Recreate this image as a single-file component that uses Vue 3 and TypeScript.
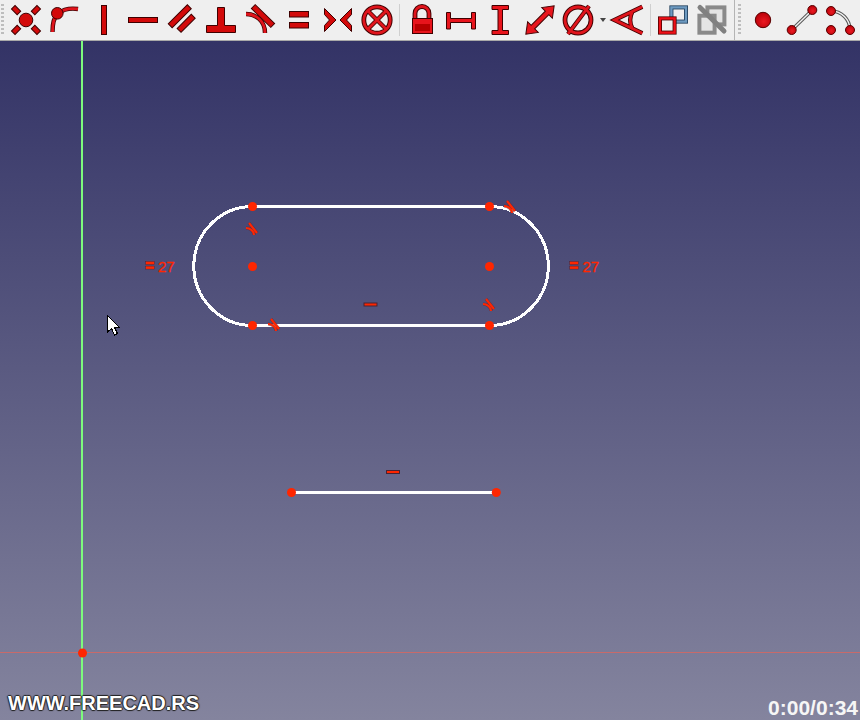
<script setup lang="ts">
const constraintPoints: [number, number][] = [
  [252.5, 206.5], [489.5, 206.5], [252.5, 325.5], [489.5, 325.5], [252.5, 266.5], [489.5, 266.5],
  [291.5, 492.5], [496.3, 492.5], [82.5, 653],
]
const tangentMarks: [number, number][] = [[252, 229], [274, 325], [489, 305], [510, 207]]
const equalMarks = [
  { x: 145.7, tx: 158, y: 261.5 },
  { x: 569.8, tx: 582.5, y: 261.5 },
]
const horizontalMarks: [number, number, number][] = [[364, 303, 13], [386.5, 470.5, 13]]
</script>

<template>
  <div class="app">
    <header class="toolbar">
      <span class="grip grip-left"></span>
      <div class="group">
        <!-- coincident -->
        <svg class="icon" viewBox="0 0 32 32">
          <g class="solid">
            <rect x="13.5" y="-2" width="5" height="8" transform="rotate(-45 16 16)" />
            <rect x="13.5" y="-2" width="5" height="8" transform="rotate(45 16 16)" />
            <rect x="13.5" y="-2" width="5" height="8" transform="rotate(135 16 16)" />
            <rect x="13.5" y="-2" width="5" height="8" transform="rotate(225 16 16)" />
            <circle cx="16" cy="16" r="6.8" />
          </g>
        </svg>
        <!-- point on object -->
        <svg class="icon" viewBox="0 0 32 32">
          <path class="line-dark" d="M3.5 28C3.5 20 5 13 9 9.5C14 5.5 22 4 29 5" />
          <path class="line-red" d="M3.5 28C3.5 20 5 13 9 9.5C14 5.5 22 4 29 5" />
          <circle class="solid" cx="8.3" cy="9.3" r="5.8" />
        </svg>
        <!-- vertical -->
        <svg class="icon" viewBox="0 0 32 32">
          <rect class="solid" x="13.5" y="1.5" width="5" height="29" />
        </svg>
        <!-- horizontal -->
        <svg class="icon" viewBox="0 0 32 32">
          <rect class="solid" x="1.5" y="13.5" width="29" height="5" />
        </svg>
        <!-- parallel -->
        <svg class="icon" viewBox="0 0 32 32">
          <g class="solid">
            <rect x="0.3" y="9.5" width="27" height="5.5" transform="rotate(-45 13.8 12.3)" />
            <rect x="10.2" y="16.5" width="20" height="5.5" transform="rotate(-45 20.2 19.3)" />
          </g>
        </svg>
        <!-- perpendicular -->
        <svg class="icon" viewBox="0 0 32 32">
          <polygon class="solid" points="12.5,3.5 19.5,3.5 19.5,21.5 30.5,21.5 30.5,28.5 1.5,28.5 1.5,21.5 12.5,21.5" />
        </svg>
        <!-- tangent -->
        <svg class="icon" viewBox="0 0 32 32">
          <rect class="solid" x="5.5" y="9.25" width="27" height="5.5" transform="rotate(44 19 12)" />
          <path class="line-dark" d="M2 10C12 10 21 17 21 29" />
          <path class="line-red" d="M2 10C12 10 21 17 21 29" />
        </svg>
        <!-- equal -->
        <svg class="icon" viewBox="0 0 32 32">
          <g class="solid">
            <rect x="6.5" y="7.5" width="19" height="5.5" />
            <rect x="6.5" y="18.5" width="19" height="5.5" />
          </g>
        </svg>
        <!-- symmetric -->
        <svg class="icon" viewBox="0 0 32 32">
          <g class="solid">
            <polygon points="2.5,4.5 14,16 2.5,27.5 2.5,21.5 7.5,16 2.5,10.5" />
            <polygon points="29.5,4.5 18,16 29.5,27.5 29.5,21.5 24.5,16 29.5,10.5" />
          </g>
        </svg>
        <!-- block -->
        <svg class="icon" viewBox="0 0 32 32">
          <circle class="line-dark thick" cx="16" cy="16" r="13.2" />
          <path class="line-dark" d="M7 7L25 25M25 7L7 25" />
          <path class="line-red" d="M7 7L25 25M25 7L7 25" />
          <circle class="line-red" cx="16" cy="16" r="13.2" />
        </svg>
      </div>
      <span class="sep"></span>
      <div class="group">
        <!-- lock -->
        <svg class="icon" viewBox="0 0 32 32">
          <path class="line-dark thick" d="M9 15V9.5a7 7 0 0 1 14 0V15" />
          <path class="line-red" d="M9 15V9.5a7 7 0 0 1 14 0V15" />
          <rect class="solid bright" x="6.5" y="14.5" width="20" height="15" />
          <rect class="shade" x="9" y="20" width="15" height="7" />
        </svg>
        <!-- horizontal distance -->
        <svg class="icon" viewBox="0 0 32 32">
          <polygon class="solid bright" points="1.5,8.5 5.5,8.5 5.5,14.5 26.5,14.5 26.5,8.5 30.5,8.5 30.5,25 26.5,25 26.5,18.5 5.5,18.5 5.5,25 1.5,25" />
        </svg>
        <!-- vertical distance -->
        <svg class="icon" viewBox="0 0 32 32">
          <polygon class="solid bright" points="8,1.5 24.5,1.5 24.5,5.5 18.5,5.5 18.5,26.5 24.5,26.5 24.5,30.5 8,30.5 8,26.5 14,26.5 14,5.5 8,5.5" />
        </svg>
        <!-- length -->
        <svg class="icon" viewBox="0 0 32 32">
          <polygon class="solid bright" transform="rotate(-45 17 16)" points="-3,16 7,8.5 7,13.5 27,13.5 27,8.5 37,16 27,23.5 27,18.5 7,18.5 7,23.5" />
        </svg>
        <!-- diameter -->
        <svg class="icon" viewBox="0 0 32 32">
          <circle class="line-dark thick" cx="16" cy="16" r="13" />
          <path class="line-dark" d="M6 30L27 2" />
          <circle class="line-red" cx="16" cy="16" r="13" />
          <path class="line-red" d="M6 30L27 2" />
        </svg>
      </div>
      <span class="caret"></span>
      <div class="group">
        <!-- angle -->
        <svg class="icon" viewBox="0 0 32 32">
          <path class="line-dark" d="M30.3 2.7L2.5 16L30.3 29.3M20.3 7.7Q16 16 20.3 24.3" />
          <path class="line-red" d="M30.3 2.7L2.5 16L30.3 29.3M20.3 7.7Q16 16 20.3 24.3" />
        </svg>
      </div>
      <span class="sep sep-last"></span>
      <div class="group">
        <!-- internal / external: red and blue squares -->
        <svg class="icon" viewBox="0 0 32 32">
          <rect class="square-blue-dark" x="13.4" y="3.4" width="14.6" height="14.2" />
          <rect class="square-blue" x="13.4" y="3.4" width="14.6" height="14.2" />
          <rect class="square-red-dark" x="2" y="14.4" width="14.6" height="14.2" />
          <rect class="square-red" x="2" y="14.4" width="14.6" height="14.2" />
        </svg>
        <!-- toggle construction: disabled -->
        <svg class="icon" viewBox="0 0 32 32">
          <rect class="square-gray" x="10.4" y="3.4" width="17" height="17" />
          <rect class="square-gray" x="2.4" y="11.7" width="15.2" height="17" />
          <path class="bar-gray" d="M3 3.5L27 27" />
        </svg>
      </div>
      <span class="divider"></span>
      <span class="grip grip-right"></span>
      <div class="group group-points">
        <svg class="icon" viewBox="0 0 32 32">
          <defs>
            <radialGradient id="ballShine" cx="0.55" cy="0.6" r="0.6">
              <stop offset="0" stop-color="#ec1a22" />
              <stop offset="1" stop-color="#b80008" />
            </radialGradient>
          </defs>
          <circle class="ball" cx="16" cy="16" r="7.7" />
        </svg>
        <svg class="icon" viewBox="0 0 32 32">
          <path class="link-dark" d="M5.7 26L26.3 6" />
          <path class="link-light" d="M5.7 26L26.3 6" />
          <circle class="ball" cx="5.7" cy="26" r="4.5" />
          <circle class="ball" cx="26.3" cy="6" r="4.5" />
        </svg>
        <svg class="icon" viewBox="0 0 32 32">
          <path class="link-dark" d="M6 7A19 19 0 0 1 25 26" />
          <path class="link-light" d="M6 7A19 19 0 0 1 25 26" />
          <circle class="ball" cx="6" cy="7" r="4.5" />
          <circle class="ball" cx="6" cy="26" r="4.5" />
          <circle class="ball" cx="25" cy="26" r="4.5" />
        </svg>
      </div>
    </header>

    <main class="viewport">
      <svg class="canvas" viewBox="0 41 860 679">
        <rect class="axis-x" x="0" y="652" width="860" height="1" />
        <rect class="axis-y" x="81" y="41" width="2" height="679" />

        <path class="geometry" d="M252.5 206.5H489.5A58.8 59.5 0 0 1 489.5 325.5H252.5A58.7 59.5 0 0 1 252.5 206.5Z" />
        <path class="geometry" d="M291.5 492.5H496" />

        <circle v-for="p in constraintPoints" :key="`${p[0]}-${p[1]}`" class="point" :cx="p[0]" :cy="p[1]" r="4.5" />

        <g v-for="m in tangentMarks" :key="`t${m[0]}`" :transform="`translate(${m[0]} ${m[1]})`">
          <path class="mark-shadow" d="M-3 -6L5 4M-6 -1C-2 -1 2 2 2 6" />
          <path class="mark" d="M-3 -6L5 4M-6 -1C-2 -1 2 2 2 6" />
        </g>

        <rect
          v-for="h in horizontalMarks"
          :key="`h${h[0]}`"
          class="mark-bar"
          :x="h[0]"
          :y="h[1]"
          :width="h[2]"
          height="3"
        />

        <g v-for="e in equalMarks" :key="`e${e.x}`">
          <rect class="mark-bar thin" :x="e.x" :y="e.y" width="8.6" height="3" />
          <rect class="mark-bar thin" :x="e.x" :y="e.y + 4.6" width="8.6" height="3" />
          <text class="datum" :x="e.tx" y="272">27</text>
        </g>

        <path class="cursor" d="M107.5 315.5V332L111.5 328.5L114.5 335L117.5 333.5L114.5 327.5H119.5Z" />
      </svg>

      <span class="watermark">WWW.FREECAD.RS</span>
      <span class="timer">0:00/0:34</span>
    </main>
  </div>
</template>

<style>
html,
body {
  margin: 0;
  overflow: hidden;
}
</style>

<style scoped>
.app {
  width: 860px;
  height: 720px;
  display: flex;
  flex-direction: column;
  overflow: hidden;
  font-family: "Liberation Sans", Arial, sans-serif;
}

.toolbar {
  position: relative;
  flex: none;
  height: 40px;
  box-sizing: content-box;
  display: flex;
  align-items: center;
  background: #efefef;
  border-bottom: 1px solid #a9a9a9;
}

.group {
  display: flex;
  align-items: center;
  gap: 7px;
}

.icon {
  flex: none;
  width: 32px;
  height: 32px;
  overflow: visible;
}

.grip {
  flex: none;
  width: 3px;
  height: 32px;
  background: repeating-linear-gradient(to bottom, #bdbdbd 0 2px, transparent 2px 4px);
}

.grip-left {
  margin-left: 1px;
  margin-right: 6px;
}

.grip-right {
  margin-left: 3px;
  margin-right: 6px;
}

.sep {
  flex: none;
  width: 1px;
  height: 32px;
  margin: 0 6px;
  background: #cfcfcf;
}

.sep-last {
  margin: 0 7px 0 6px;
}

.caret {
  flex: none;
  width: 0;
  height: 0;
  margin: 0 6px 0 6px;
  border-left: 3.5px solid transparent;
  border-right: 3.5px solid transparent;
  border-top: 4px solid #444;
}

.divider {
  flex: none;
  width: 1px;
  height: 40px;
  margin-left: 5px;
  background: #b4b4b4;
}

.solid,
.solid * {
  fill: #d30a0a;
  stroke: #3f0000;
  stroke-width: 1;
}

.bright {
  fill: #e8141c;
}

.shade {
  fill: #b80000;
}

.line-dark {
  fill: none;
  stroke: #3f0000;
  stroke-width: 4.4;
}

.line-dark.thick {
  stroke-width: 4.8;
}

.line-red {
  fill: none;
  stroke: #e0141c;
  stroke-width: 2.8;
}

.square-blue-dark {
  fill: #efefef;
  stroke: #1c3a57;
  stroke-width: 4;
}

.square-blue {
  fill: none;
  stroke: #6d9ac0;
  stroke-width: 2.4;
}

.square-red-dark {
  fill: #efefef;
  stroke: #4a0000;
  stroke-width: 4;
}

.square-red {
  fill: none;
  stroke: #ee1018;
  stroke-width: 2.4;
}

.square-gray {
  fill: #e4e4e4;
  stroke: #8a8a8a;
  stroke-width: 4;
}

.bar-gray {
  fill: none;
  stroke: #808080;
  stroke-width: 5;
  stroke-linecap: round;
}

.ball {
  fill: url(#ballShine);
  stroke: #5a0000;
  stroke-width: 1;
}

.link-dark {
  fill: none;
  stroke: #555;
  stroke-width: 3.4;
}

.link-light {
  fill: none;
  stroke: #f2f2f2;
  stroke-width: 1.4;
}

.viewport {
  position: relative;
  flex: 1;
  background: linear-gradient(to bottom, #333366, #84849e);
}

.canvas {
  position: absolute;
  inset: 0;
  width: 860px;
  height: 679px;
}

.axis-x {
  fill: #c86a6a;
}

.axis-y {
  fill: #7dfb7d;
}

.geometry {
  fill: none;
  stroke: #fff;
  stroke-width: 3;
  shape-rendering: crispEdges;
}

.point {
  fill: #ff2600;
}

.mark {
  fill: none;
  stroke: #ff2600;
  stroke-width: 2.1;
}

.mark-shadow {
  fill: none;
  stroke: #5c2338;
  stroke-width: 3.2;
  opacity: 0.6;
}

.mark-bar {
  fill: #ff2600;
  stroke: #4a2233;
  stroke-width: 1;
}

.mark-bar.thin {
  stroke-width: 0.4;
}

.datum {
  font-family: "Liberation Sans", Arial, sans-serif;
  font-size: 15px;
  fill: #ff2600;
  stroke: #ff2600;
  stroke-width: 0.3;
}

.cursor {
  fill: #fff;
  stroke: #000;
  stroke-width: 1;
  shape-rendering: crispEdges;
}

.watermark {
  position: absolute;
  left: 8px;
  bottom: 6px;
  font-size: 20px;
  line-height: 22px;
  font-weight: 700;
  color: #fff;
  text-shadow: 1px 0 1px #222, -1px 0 1px #222, 0 1px 1px #222, 0 -1px 1px #222;
}

.timer {
  position: absolute;
  right: 2px;
  bottom: 0;
  font-size: 21px;
  line-height: 24px;
  font-weight: 700;
  color: #f6f6f6;
}
</style>
